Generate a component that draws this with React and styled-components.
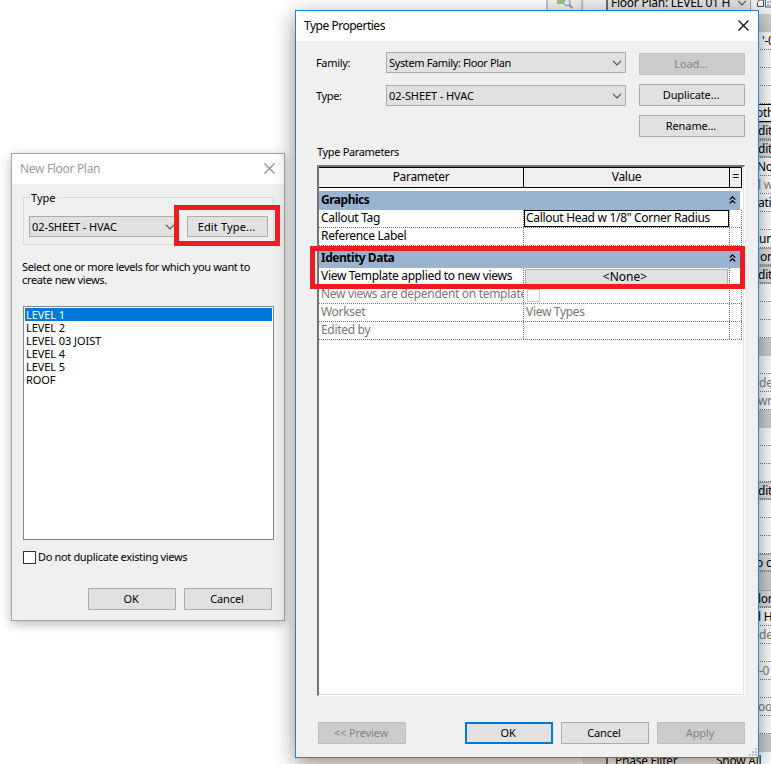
import React from "react";
import styled, { createGlobalStyle, css } from "styled-components";

const paletteRows = [
  { kind: "header" },
  { kind: "text", text: "'-0", indent: 4 },
  { kind: "text" },
  { kind: "text" },
  { kind: "text" },
  { kind: "boxed", text: "oth", indent: -2 },
  { kind: "button", text: "dit" },
  { kind: "button", text: "dit" },
  { kind: "text", text: "No", indent: -1 },
  { kind: "text", text: "l w", muted: true },
  { kind: "text", text: "ati" },
  { kind: "text" },
  { kind: "text", text: "un", indent: 1 },
  { kind: "button", text: "on", indent: 2 },
  { kind: "button", text: "dit" },
  { kind: "text" },
  { kind: "text" },
  { kind: "text" },
  { kind: "header" },
  { kind: "text" },
  { kind: "text", text: "de", muted: true, indent: 1 },
  { kind: "text", text: "wn", muted: true },
  { kind: "header" },
  { kind: "text" },
  { kind: "text" },
  { kind: "text" },
  { kind: "button", text: "dit" },
  { kind: "text" },
  { kind: "text" },
  { kind: "text" },
  { kind: "button", text: "o c", indent: -2 },
  { kind: "header" },
  { kind: "button", text: "lor" },
  { kind: "text", text: "l H" },
  { kind: "text", text: "de", muted: true, indent: 1 },
  { kind: "text" },
  { kind: "text", text: "-01", muted: true, indent: 1 },
  { kind: "text" },
  { kind: "text", text: "oo", muted: true },
  { kind: "text" },
  { kind: "header" },
];

const levels = ["LEVEL 1", "LEVEL 2", "LEVEL 03 JOIST", "LEVEL 4", "LEVEL 5", "ROOF"];

const Chevron = () => (
  <svg width="10" height="6" viewBox="0 0 10 6" fill="none">
    <path d="M1 0.8L5 4.8L9 0.8" stroke="#505050" strokeWidth="1.2" />
  </svg>
);

const CloseIcon = ({ color }) => (
  <svg width="11" height="11" viewBox="0 0 11 11" fill="none">
    <path d="M0.5 0.5L10.5 10.5M10.5 0.5L0.5 10.5" stroke={color} strokeWidth="1.15" />
  </svg>
);

const Collapse = () => (
  <svg width="7" height="8" viewBox="0 0 7 8" fill="none">
    <path d="M0.7 3.6L3.5 0.9L6.3 3.6M0.7 7.4L3.5 4.7L6.3 7.4" stroke="#000" strokeWidth="1.3" />
  </svg>
);

const Grip = () => (
  <svg width="9" height="9" viewBox="0 0 9 9" fill="#bdbdbd">
    <path d="M6 0h2v2h-2zM3 3h2v2h-2zM6 3h2v2h-2zM0 6h2v2h-2zM3 6h2v2h-2zM6 6h2v2h-2z" />
  </svg>
);

const Combo = ({ children, width, ls = -0.08 }) => (
  <ComboBox $width={width}>
    <T $ls={ls}>{children}</T>
    <Chevron />
  </ComboBox>
);

const NewFloorPlan = () => (
  <SmallDialog>
    <TitleBar $muted>
      <T $ls={-0.32}>New Floor Plan</T>
      <CloseIcon color="#8f8f8f" />
    </TitleBar>
    <SmallBody>
      <Group>
        <Legend>Type</Legend>
        <Combo width={150}>02-SHEET - HVAC</Combo>
        <Button $width={81} $height={21} $ls={0.15}>
          Edit Type...
        </Button>
      </Group>
      <Hint>
        Select one or more levels for which you want to
        <br />
        create new views.
      </Hint>
      <LevelList>
        {levels.map((level, i) => (
          <Level key={level} $selected={i === 0}>
            {level}
          </Level>
        ))}
      </LevelList>
      <CheckRow>
        <CheckBox />
        <CheckLabel>Do not duplicate existing views</CheckLabel>
      </CheckRow>
      <SmallActions>
        <Button $width={88}>OK</Button>
        <Button $width={88}>Cancel</Button>
      </SmallActions>
    </SmallBody>
  </SmallDialog>
);

const TypeProperties = () => (
  <MainDialog>
    <TitleBar>
      <T $ls={-0.48}>Type Properties</T>
      <CloseIcon color="#000" />
    </TitleBar>
    <Form>
      <Fields>
        <Field>
          <Label>Family:</Label>
          <Combo width={240} ls={-0.37}>
            System Family: Floor Plan
          </Combo>
        </Field>
        <Field>
          <Label>Type:</Label>
          <Combo width={240}>02-SHEET - HVAC</Combo>
        </Field>
      </Fields>
      <FormButtons>
        <Button $width={106} $disabled>
          Load...
        </Button>
        <Button $width={106}>Duplicate...</Button>
        <Button $width={106}>Rename...</Button>
      </FormButtons>
    </Form>
    <Caption>Type Parameters</Caption>
    <Table>
      <HeadRow>
        <HeadCell>Parameter</HeadCell>
        <HeadCell>Value</HeadCell>
        <HeadCell>=</HeadCell>
      </HeadRow>
      <Section>
        <span>Graphics</span>
        <Collapse />
      </Section>
      <Row>
        <Cell>Callout Tag</Cell>
        <Cell>
          <ActiveValue>Callout Head w 1/8" Corner Radius</ActiveValue>
        </Cell>
        <Cell />
      </Row>
      <Row>
        <Cell>Reference Label</Cell>
        <Cell />
        <Cell />
      </Row>
      <Section $spaced>
        <span>Identity Data</span>
        <Collapse />
      </Section>
      <Row>
        <Cell>View Template applied to new views</Cell>
        <Cell>
          <ValueButton>&lt;None&gt;</ValueButton>
        </Cell>
        <Cell />
      </Row>
      <Row $muted>
        <Cell>New views are dependent on template</Cell>
        <Cell>
          <RowCheckBox $muted />
        </Cell>
        <Cell />
      </Row>
      <Row $muted>
        <Cell>Workset</Cell>
        <Cell>View Types</Cell>
        <Cell />
      </Row>
      <Row $muted>
        <Cell>Edited by</Cell>
        <Cell />
        <Cell />
      </Row>
    </Table>
    <MainActions>
      <Button $width={88} $disabled>
        &lt;&lt; Preview
      </Button>
      <Spacer />
      <Button $width={88} $primary>
        OK
      </Button>
      <Button $width={88}>Cancel</Button>
      <Button $width={88} $disabled>
        Apply
      </Button>
    </MainActions>
    <GripCorner>
      <Grip />
    </GripCorner>
  </MainDialog>
);

const App = () => (
  <Desktop>
    <Global />
    <Canvas>
      <CanvasTool>
        <svg width="18" height="9" viewBox="0 0 18 9" fill="none">
          <rect x="1" y="0" width="7" height="4" fill="#9cc48c" />
          <circle cx="11" cy="2.5" r="3.2" stroke="#a5a5a5" strokeWidth="1.2" fill="#e9eef2" />
          <path d="M13 5L16.5 8" stroke="#999" strokeWidth="1.8" />
        </svg>
      </CanvasTool>
    </Canvas>
    <Gutter />
    <Palette>
      <PaletteTop>
        <PaletteCombo>
          <span>Floor Plan: LEVEL 01 H</span>
          <Chevron />
        </PaletteCombo>
        <svg width="20" height="11" viewBox="0 0 20 11" fill="none">
          <path d="M6.500 2.500L8.500 0H12.500V6.500H6.500Z" stroke="#444" fill="#fff" />
          <rect x="14.500" y="-1" width="9" height="8" stroke="#315b9c" fill="#fff" />
          <path d="M16 2h4M16 5h4" stroke="#555" strokeDasharray="2 1" />
        </svg>
      </PaletteTop>
      {paletteRows.map((row, i) => (
        <PaletteRow key={i} $kind={row.kind} $muted={row.muted} $indent={row.indent}>
          {row.text && <span>{row.text}</span>}
        </PaletteRow>
      ))}
      <PhaseRow>
        <span>Phase Filter</span>
        <span>Show All</span>
      </PhaseRow>
    </Palette>
    <NewFloorPlan />
    <TypeProperties />
    <Highlight $x={174} $y={205} $w={106} $h={41} />
    <Highlight $x={310} $y={246} $w={435} $h={43} />
  </Desktop>
);

export default App;

const Global = createGlobalStyle`
  * {
    box-sizing: border-box;
  }
  body {
    margin: 0;
    overflow: hidden;
  }
  svg {
    display: block;
    flex: none;
  }
`;

const uiFont = css`
  font-family: "Noto Sans", sans-serif;
  font-size: 11px;
  letter-spacing: -0.34px;
  line-height: 13px;
`;

const Desktop = styled.div`
  position: relative;
  display: flex;
  width: 771px;
  height: 764px;
  overflow: hidden;
  background: #fff;
  color: #000;
  ${uiFont}
`;

const T = styled.span`
  letter-spacing: ${(p) => p.$ls}px;
  white-space: nowrap;
`;

const Canvas = styled.div`
  display: flex;
  justify-content: flex-end;
  width: 583px;
  background: #fff;
`;

const CanvasTool = styled.div`
  width: 37px;
  height: 10px;
  padding-left: 8px;
  background: #f0f0f0;
  border-left: 2px solid #c4c4c4;
  border-right: 2px solid #c4c4c4;
`;

const Gutter = styled.div`
  width: 23px;
  background: #f0f0f0;
  border-left: 1px solid #e3e3e3;
`;

const Palette = styled.div`
  width: 165px;
  background: #fff;
  border-left: 2px solid #696969;
  font-size: 12px;
  letter-spacing: -0.25px;
`;

const PaletteTop = styled.div`
  display: flex;
  height: 14px;
  background: #f0f0f0;
`;

const PaletteCombo = styled.div`
  display: flex;
  justify-content: space-between;
  width: 143px;
  height: 10px;
  padding: 0 3px 0 3px;
  background: #e1e1e1;
  border-right: 1px solid #999;
  white-space: nowrap;

  span {
    margin-top: -4px;
  }
`;

const PaletteRow = styled.div`
  height: 18px;
  padding-left: ${(p) => 150 + (p.$indent || 0)}px;
  border-bottom: 1px dotted #777;
  background: #fff;
  color: ${(p) => (p.$muted ? "#808080" : "#000")};
  line-height: 17px;
  white-space: nowrap;
  overflow: hidden;

  ${(p) =>
    p.$kind === "header" &&
    css`
      background: #d0d0d0;
      border-bottom-color: #d0d0d0;
    `}
  ${(p) =>
    p.$kind === "boxed" &&
    css`
      border-top: 1px solid #000;
      border-bottom: 1px solid #000;
      line-height: 15px;
    `}
  ${(p) =>
    p.$kind === "button" &&
    css`
      background: #e1e1e1;
      box-shadow: inset 0 1px #adadad, inset 0 -1px #adadad;
    `}
`;

const PhaseRow = styled.div`
  display: flex;
  height: 18px;
  line-height: 17px;
  padding-left: 7px;

  span {
    width: 101px;
    flex: none;
  }
`;

const Dialog = styled.div`
  position: absolute;
  display: flex;
  flex-direction: column;
  background: #f0f0f0;
`;

const SmallDialog = styled(Dialog)`
  left: 11px;
  top: 153px;
  width: 274px;
  height: 468px;
  border: 1px solid #a6a6a6;
  box-shadow: 0 3px 10px rgba(0, 0, 0, 0.28);
`;

const MainDialog = styled(Dialog)`
  left: 295px;
  top: 10px;
  width: 464px;
  height: 748px;
  border: 1px solid #1883d7;
  box-shadow: 0 6px 20px rgba(0, 0, 0, 0.45);
`;

const TitleBar = styled.div`
  display: flex;
  align-items: center;
  justify-content: space-between;
  height: 30px;
  padding: 0 9px 1px 8px;
  background: #fff;
  color: ${(p) => (p.$muted ? "#999" : "#000")};
  font-size: 12px;
`;

const SmallBody = styled.div`
  display: flex;
  flex-direction: column;
  padding: 13px 10px 0 11px;
`;

const Group = styled.fieldset`
  display: flex;
  position: relative;
  gap: 8px;
  height: 48px;
  margin: 0;
  padding: 18px 5px 0;
  border: 1px solid #dcdcdc;
`;

/* sits over the top edge of the group frame */
const Legend = styled.span`
  position: absolute;
  left: 6px;
  top: -7px;
  padding: 0 3px 0 1px;
  background: #f0f0f0;
  letter-spacing: 0;
`;

const ComboBox = styled.div`
  display: flex;
  align-items: center;
  justify-content: space-between;
  flex: none;
  width: ${(p) => p.$width}px;
  height: 21px;
  padding: 0 3px 0 2px;
  border: 1px solid #adadad;
  background: #e1e1e1;
`;

const Button = styled.div`
  display: flex;
  align-items: center;
  justify-content: center;
  flex: none;
  width: ${(p) => p.$width}px;
  height: ${(p) => p.$height || 22}px;
  padding: 0 2px ${(p) => (p.$height ? 0 : 2)}px 0;
  border: ${(p) => (p.$primary ? "2px solid #0078d7" : "1px solid #adadad")};
  background: #e1e1e1;
  letter-spacing: ${(p) => p.$ls ?? -0.1}px;
  white-space: nowrap;

  ${(p) =>
    p.$disabled &&
    css`
      border-color: #bfbfbf;
      background: #ccc;
      color: #838383;
    `}
`;

const Hint = styled.div`
  margin-top: 15px;
  margin-left: -1px;
  white-space: nowrap;
`;

const LevelList = styled.div`
  height: 234px;
  margin-top: 20px;
  padding: 1px;
  border: 1px solid #828790;
  background: #fff;
  letter-spacing: -0.07px;
`;

const Level = styled.div`
  height: 13px;
  padding-left: 1px;
  background: ${(p) => (p.$selected ? "#0078d7" : "transparent")};
  color: ${(p) => (p.$selected ? "#fff" : "#000")};
`;

const CheckRow = styled.div`
  display: flex;
  align-items: center;
  gap: 2px;
  height: 13px;
  margin-top: 11px;
`;

const CheckLabel = styled.span`
  padding-bottom: 2px;
`;

const CheckBox = styled.div`
  width: 13px;
  height: 13px;
  flex: none;
  border: 1px solid ${(p) => (p.$muted ? "#ccc" : "#333")};
  background: #fff;
`;

const RowCheckBox = styled(CheckBox)`
  margin: 3px 0 0 1px;
`;

const SmallActions = styled.div`
  display: flex;
  justify-content: flex-end;
  gap: 8px;
  margin-top: 24px;
  padding-right: 2px;
`;

const Form = styled.div`
  display: flex;
  justify-content: space-between;
  padding: 11px 13px 0 20px;
`;

const Fields = styled.div`
  display: flex;
  flex-direction: column;
  gap: 12px;
`;

const Field = styled.div`
  display: flex;
  align-items: center;
`;

const Label = styled.span`
  width: 70px;
`;

const FormButtons = styled.div`
  display: flex;
  flex-direction: column;
  gap: 9px;
  padding-top: 1px;
`;

const Caption = styled.div`
  margin: 8px 0 0 21px;
`;

const Table = styled.div`
  height: 531px;
  margin: 7px 13px 0 21px;
  border-top: 2px solid #747474;
  border-left: 2px solid #747474;
  border-right: 1px solid #fff;
  border-bottom: 1px solid #fff;
  box-shadow: inset -1px -1px #e3e3e3;
  background: #fff;
  font-size: 12px;
  letter-spacing: -0.31px;
`;

const columns = css`
  display: grid;
  grid-template-columns: 205px 206px 12px;
  width: 423px;
`;

const HeadRow = styled.div`
  ${columns}
  height: 21px;
  margin-bottom: 3px;
  background: #f0f0f0;
  border-top: 1px solid #000;
  border-bottom: 1px solid #000;
`;

const HeadCell = styled.div`
  border-right: 1px solid #000;
  line-height: 18px;
  text-align: center;
`;

const Section = styled.div`
  display: flex;
  align-items: center;
  justify-content: space-between;
  width: 421px;
  height: 19px;
  margin-top: ${(p) => (p.$spaced ? 3 : 0)}px;
  padding: 0 4px 2px 2px;
  background: #99b4d1;
  font-weight: 700;
  letter-spacing: -0.48px;
`;

const Row = styled.div`
  ${columns}
  height: 18px;
  color: ${(p) => (p.$muted ? "#777" : "#000")};
  border-bottom: 1px dotted #777;
`;

const Cell = styled.div`
  height: 17px;
  padding-left: 2px;
  border-right: 1px dotted #777;
  line-height: 15px;
  white-space: nowrap;
  overflow: hidden;
`;

const ActiveValue = styled.div`
  height: 17px;
  margin-left: -2px;
  padding-left: 1px;
  border: 1px solid #000;
  line-height: 13px;
`;

const ValueButton = styled.div`
  height: 16px;
  margin: 1px 1px 0 -1px;
  padding-right: 3px;
  border: 1px solid #adadad;
  background: #e1e1e1;
  letter-spacing: 0;
  line-height: 14px;
  text-align: center;
`;

const MainActions = styled.div`
  display: flex;
  gap: 8px;
  margin-top: 26px;
  padding: 0 13px 0 22px;
`;

const Spacer = styled.div`
  flex: 1;
`;

const GripCorner = styled.div`
  position: absolute;
  right: 0;
  bottom: 0;
`;

const Highlight = styled.div`
  position: absolute;
  left: ${(p) => p.$x}px;
  top: ${(p) => p.$y}px;
  width: ${(p) => p.$w}px;
  height: ${(p) => p.$h}px;
  border: 5px solid #ed1c24;
`;
